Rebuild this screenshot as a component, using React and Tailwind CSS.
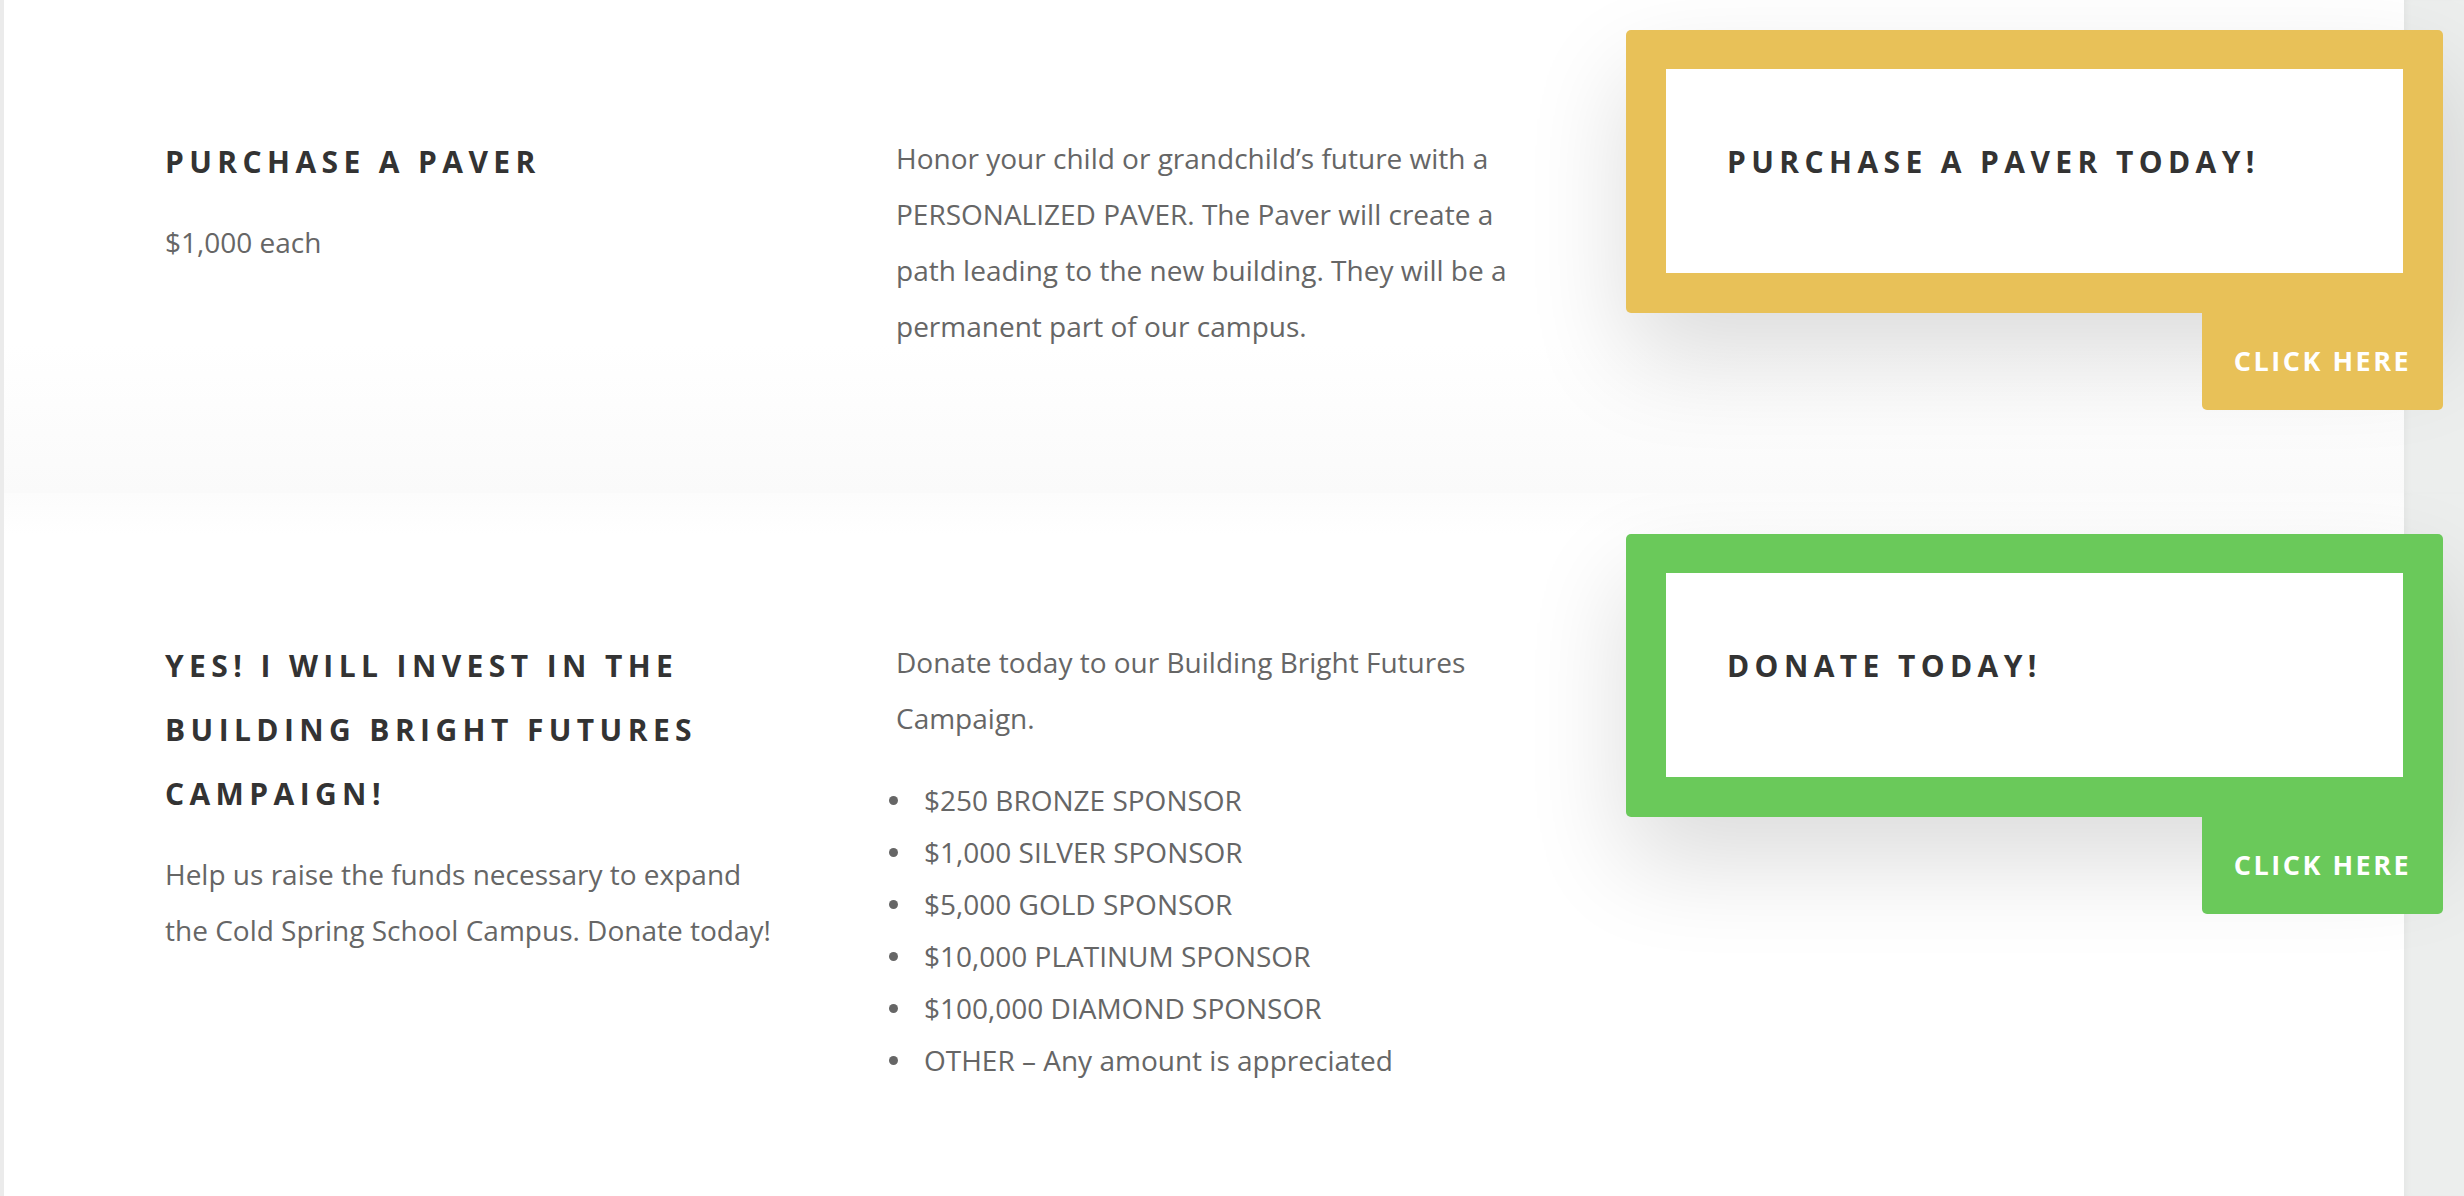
import React from 'react';

const font = { fontFamily: '"Open Sans", "Liberation Sans", sans-serif' };

const CtaBox = ({ color, title }) => {
  return (
    <div className="w-[817px] -mr-[39px] relative z-10 flex flex-col">
      <div className={`${color} rounded-[5px] rounded-br-none p-[40px] pt-[39px] shadow-[0_45px_100px_rgba(0,0,0,0.14)]`}>
        <div className="bg-white h-[204px] px-[61px] pt-[61px]">
          <h3 className="text-[30px] leading-[64px] font-bold tracking-[5.4px] text-[#333333]">{title}</h3>
        </div>
      </div>
      <div className="flex justify-end">
        <a className={`${color} w-[241px] h-[97px] rounded-b-[5px] flex items-center justify-center text-white text-[27px] font-bold tracking-[2.5px] cursor-pointer`}>
          CLICK HERE
        </a>
      </div>
    </div>
  );
};

const SideStrips = ({ children, className, top }) => (
  <section className={`flex w-full overflow-hidden ${className}`}>
    <div className="w-[4px] shrink-0 bg-[#ebebeb]" />
    <div className={`flex-1 flex items-start pl-[161px] ${top}`}>{children}</div>
    <div className="w-[60px] shrink-0 bg-[#eceeed] shadow-[inset_6px_0_10px_-6px_rgba(0,0,0,0.06)]" />
  </section>
);

const sponsors = [
  '$250 BRONZE SPONSOR',
  '$1,000 SILVER SPONSOR',
  '$5,000 GOLD SPONSOR',
  '$10,000 PLATINUM SPONSOR',
  '$100,000 DIAMOND SPONSOR',
  'OTHER – Any amount is appreciated',
];

export default function App() {
  return (
    <div className="w-full min-h-screen bg-white" style={font}>
      <SideStrips top="pt-[30px]" className="h-[493px] bg-gradient-to-b from-white from-70% to-[#fafafa]">
        <div className="w-[731px] shrink-0 pt-[100px]">
          <div className="w-[610px]">
            <h2 className="text-[30px] leading-[64px] font-bold tracking-[5.4px] text-[#333333]">PURCHASE A PAVER</h2>
            <p className="mt-[20px] text-[28px] leading-[56px] text-[#666666]">$1,000 each</p>
          </div>
        </div>
        <div className="w-[730px] shrink-0 pt-[100px]">
          <p className="w-[630px] text-[28px] leading-[56px] text-[#666666]">
            Honor your child or grandchild’s future with a PERSONALIZED PAVER. The Paver will create a path leading to the new building. They will be a permanent part of our campus.
          </p>
        </div>
        <CtaBox color="bg-[#e8c158]" title="PURCHASE A PAVER TODAY!" />
      </SideStrips>

      <SideStrips top="pt-[41px]" className="h-[703px] bg-gradient-to-b from-[#fcfcfc] to-white to-[6%]">
        <div className="w-[731px] shrink-0 pt-[100px]">
          <div className="w-[610px]">
            <h2 className="text-[30px] leading-[64px] font-bold tracking-[5.4px] text-[#333333]">
              YES! I WILL INVEST IN THE BUILDING BRIGHT FUTURES CAMPAIGN!
            </h2>
            <p className="mt-[20px] text-[28px] leading-[56px] text-[#666666]">
              Help us raise the funds necessary to expand the Cold Spring School Campus. Donate today!
            </p>
          </div>
        </div>
        <div className="w-[730px] shrink-0 pt-[100px]">
          <p className="w-[630px] text-[28px] leading-[56px] text-[#666666]">
            Donate today to our Building Bright Futures Campaign.
          </p>
          <ul className="mt-[28px] -ml-[7px]">
            {sponsors.map(s => (
              <li key={s} className="flex items-center gap-[26px] text-[28px] leading-[52px] text-[#666666]">
                <span className="w-[9px] h-[9px] rounded-full bg-[#666666] shrink-0" />
                {s}
              </li>
            ))}
          </ul>
        </div>
        <CtaBox color="bg-[#6ac95a]" title="DONATE TODAY!" />
      </SideStrips>
    </div>
  );
}
